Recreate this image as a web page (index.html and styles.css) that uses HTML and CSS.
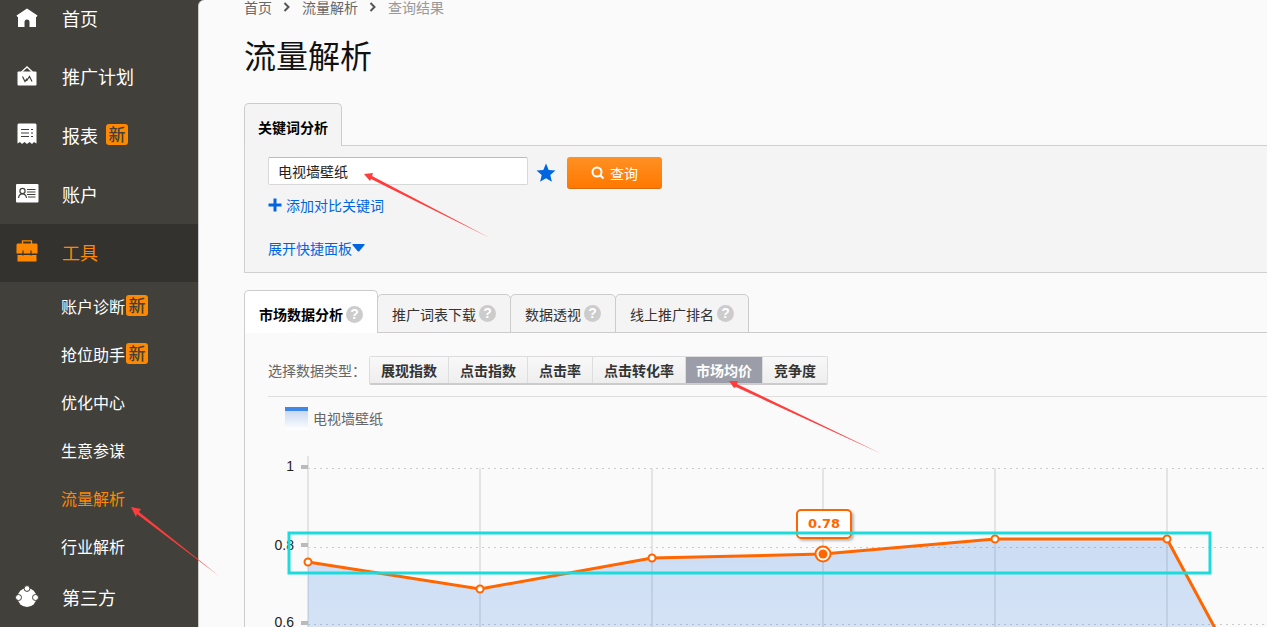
FILE: index.html
```html
<!DOCTYPE html>
<html lang="zh-CN">
<head>
<meta charset="utf-8">
<title>流量解析</title>
<link rel="stylesheet" href="styles.css">
</head>
<body>
<div class="layout">
  <nav class="sidebar">
    <ul class="menu">
      <li><a class="item first" href="#"><svg class="icon" viewBox="0 0 24 24"><path fill="#fff" fill-rule="evenodd" d="M12 2.500 1.500 9.500 2.500 11H3V21H21V11H21.500L22.500 9.500ZM9.500 21V16Q9.500 13.500 12 13.500T14.500 16V21Z"/></svg>首页</a></li>
      <li><a class="item" href="#"><svg class="icon" viewBox="0 0 24 24"><path fill="none" stroke="#fff" stroke-width="1.300" d="M6.500 8 12 3 17.500 8"/><rect x="2.500" y="7.500" width="19" height="14" rx="1" fill="#fff"/><path fill="none" stroke="#42403b" stroke-width="1.200" d="M7.500 12.500 10 17.500 12 14.500M11.500 17 14.500 12.500 17 17.500"/></svg>推广计划</a></li>
      <li><a class="item" href="#"><svg class="icon" viewBox="0 0 24 24"><path fill="#fff" d="M3.500 0.500H20.500L21.500 1.500V20.500L19 19 17 21 14.500 19 12 21 9.500 19 7 21 5 19 2.500 20.500V1.500Z"/><path stroke="#42403b" stroke-width="1.200" d="M6 6.500h8M6 10h8M6 13.500h8M16 6.500h2M16 10h2M16 13.500h2"/></svg>报表<span class="badge gap">新</span></a></li>
      <li><a class="item" href="#"><svg class="icon" viewBox="0 0 24 24"><rect x="1" y="2" width="22.500" height="18.500" rx="1" fill="#fff"/><g fill="none" stroke="#42403b" stroke-width="1.200"><circle cx="7.500" cy="9" r="2.600"/><path d="M3.500 16Q4 11.800 7.500 11.800T11.500 16M12 7.500h8.500M12 10h8.500M12 12.500h8.500M13 15h7.500"/></g></svg>账户</a></li>
      <li><a class="item current" href="#"><svg class="icon" viewBox="0 0 24 24"><path fill="none" stroke="#ff8800" stroke-width="1.300" d="M7.500 4V0.900H16.500V4"/><path fill="#ff8800" d="M2.500 3.500H21.500L22.500 4.500V13.500H1.500V4.500ZM2.500 15H21.500V21.500H2.500Z"/><path stroke="#34322e" stroke-width="1.200" d="M8 10.500v5M16 10.500v5"/></svg>工具</a></li>
    </ul>
    <ul class="menu">
      <li><a class="subitem" href="#">账户诊断<span class="badge">新</span></a></li>
      <li><a class="subitem" href="#">抢位助手<span class="badge">新</span></a></li>
      <li><a class="subitem" href="#">优化中心</a></li>
      <li><a class="subitem" href="#">生意参谋</a></li>
      <li><a class="subitem active" href="#">流量解析</a></li>
      <li><a class="subitem" href="#">行业解析</a></li>
    </ul>
    <ul class="menu">
      <li><a class="item last" href="#"><svg class="icon" viewBox="0 0 24 24"><circle cx="12" cy="12.500" r="9.500" fill="#fff"/><g fill="#fff" stroke="#42403b" stroke-width="1"><circle cx="12" cy="3.500" r="2.900"/><circle cx="3.500" cy="12.500" r="3"/><circle cx="20.500" cy="12.500" r="3"/></g></svg>第三方</a></li>
    </ul>
  </nav>

  <main class="main">
    <div class="crumbs">
      <a href="#">首页</a>
      <svg class="chevron" viewBox="0 0 8 10"><path d="M1.500 1 5.500 5 1.500 9"/></svg>
      <a href="#">流量解析</a>
      <svg class="chevron" viewBox="0 0 8 10"><path d="M1.500 1 5.500 5 1.500 9"/></svg>
      <span class="here">查询结果</span>
    </div>
    <h1 class="title">流量解析</h1>

    <div class="tabs"><button class="tab search-tab">关键词分析</button></div>
    <form class="panel search">
      <div class="search-row">
        <input class="keyword" type="text" value="电视墙壁纸" aria-label="关键词">
        <svg class="star" viewBox="0 0 20 20"><path fill="#0066e0" d="M10 .500 12.700 6.900 19.500 7.500 14.300 12 15.900 18.800 10 15.200 4.100 18.800 5.700 12 .500 7.500 7.300 6.900Z"/></svg>
        <button class="query" type="button"><svg class="lens" viewBox="0 0 14 14"><circle cx="6" cy="6" r="4.500"/><path d="M9.200 9.200 12.500 12.500"/></svg>查询</button>
      </div>
      <a class="link add" href="#"><svg class="plus" viewBox="0 0 14 14"><path d="M7 .500V13.500M.500 7H13.500"/></svg>添加对比关键词</a>
      <a class="link" href="#">展开快捷面板<svg class="caret" viewBox="0 0 13 8"><path d="M1 0H12Q13 0 12.500 1L7.500 7Q6.500 8 5.500 7L.500 1Q0 0 1 0Z"/></svg></a>
    </form>

    <div class="tabs data-tabs">
      <button class="tab selected">市场数据分析<span class="help">?</span></button>
      <button class="tab">推广词表下载<span class="help">?</span></button>
      <button class="tab">数据透视<span class="help">?</span></button>
      <button class="tab">线上推广排名<span class="help">?</span></button>
    </div>
    <section class="panel data">
      <div class="types">
        <span class="types-label">选择数据类型<span class="colon">：</span></span>
        <div class="segments">
          <button>展现指数</button><button>点击指数</button><button>点击率</button><button>点击转化率</button><button class="on">市场均价</button><button>竞争度</button>
        </div>
      </div>
      <div class="legend"><span class="swatch"></span>电视墙壁纸</div>
      <svg class="chart" role="img" aria-label="市场均价">
        <defs>
          <linearGradient id="area" x1="0" y1="103" x2="0" y2="400" gradientUnits="userSpaceOnUse"><stop offset="0" stop-color="#2f7be0" stop-opacity=".23"/><stop offset="1" stop-color="#3b7fe0" stop-opacity="0.080"/></linearGradient>
          <filter id="shadow" x="-20%" y="-20%" width="150%" height="160%"><feDropShadow dx="2" dy="2" stdDeviation="1" flood-color="#000" flood-opacity=".25"/></filter>
        </defs>
        <path class="grid-h" d="M40 32H1400M40 111H1400M40 188H1400"/>
        <path class="grid-v" d="M40 20V220M212 32V220M384 32V220M555 32V220M727 32V220M899 32V220"/>
        <path class="tick" d="M33 31H40M33 109H40M33 187H40"/>
        <path fill="url(#area)" d="M40 126 212 153 384 122 555 118 727 103H899L962 220H40Z"/>
        <path class="series" d="M40 126 212 153 384 122 555 118 727 103H899L962 220"/>
        <g class="dots"><circle cx="40" cy="126" r="3.500"/><circle cx="212" cy="153" r="3.500"/><circle cx="384" cy="122" r="3.500"/><circle cx="727" cy="103" r="3.500"/><circle cx="899" cy="103" r="3.500"/><circle cx="555" cy="118" r="7.500"/></g>
        <circle cx="555" cy="118" r="4.500" fill="#ff6600"/>
        <g class="axis"><text x="26" y="35">1</text><text x="26" y="114">0.8</text><text x="26" y="191">0.6</text></g>
        <rect class="tip" x="529" y="74" width="54" height="28" rx="4" filter="url(#shadow)"/>
        <text class="tip-text" x="556" y="92">0.78</text>
        <rect class="frame" x="21" y="97" width="921" height="40"/>
      </svg>
    </section>
  </main>
  <svg class="marks" aria-hidden="true">
    <path d="M131 507 141 509 139 512 219 576 137 514 136 517Z"/>
    <path d="M364 174 373 173 372 176 490 238 371 179 370 181Z"/>
    <path d="M729 381 738 381 737 384 882 454 736 387 734 388Z"/>
  </svg>
</div>
</body>
</html>
```
FILE: styles.css
```css
* { box-sizing: border-box; }
body {
  margin: 0;
  height: 100vh;
  overflow: hidden;
  background: #42403b;
  font: 14px/20px "Noto Sans CJK SC", sans-serif;
  color: #333;
}
a { text-decoration: none; color: inherit; }
button, input { font: inherit; color: inherit; margin: 0; }
svg { display: block; flex: none; }

.layout { position: relative; display: flex; height: 100vh; overflow: hidden; }
.sidebar { flex: none; width: 198px; color: #fff; }
.menu { list-style: none; margin: 0; padding: 0; }
.item {
  display: flex;
  align-items: center;
  height: 59px;
  padding-left: 15px;
  padding-bottom: 2px;
  gap: 23px;
  font-size: 18px;
}
.first { height: 47px; padding-bottom: 11px; }
.last { height: 56px; }
.icon { width: 24px; height: 24px; }
.current { height: 58px; background: #34322e; color: #ff8800; }
.subitem {
  display: flex;
  align-items: center;
  height: 48px;
  padding-left: 61px;
  padding-bottom: 1px;
  font-size: 16px;
}
.subitem.active { color: #ff8800; }
.badge {
  width: 22px;
  height: 21px;
  margin-left: 1px;
  border-radius: 3px;
  background: #ff8800;
  color: #42403b;
  font-size: 17px;
  font-weight: 500;
  line-height: 20px;
  text-align: center;
}
.badge.gap { margin-left: -15px; }

.main {
  flex: 1;
  min-width: 0;
  padding-left: 45px;
  overflow: hidden;
  border-left: 1px solid #ccc;
  border-top-left-radius: 6px;
  background: #fafafa;
}
.crumbs { display: flex; align-items: center; gap: 11px; height: 14px; line-height: 14px; color: #666; }
.crumbs .here { color: #999; }
.chevron { width: 8px; height: 10px; fill: none; stroke: #555; stroke-width: 2; }
.title { margin: 16px 0 25px; font-size: 32px; line-height: 48px; font-weight: 400; color: #111; }

.tabs { display: flex; align-items: flex-end; margin-bottom: -1px; position: relative; }
.tab {
  display: flex;
  align-items: center;
  gap: 3px;
  height: 39px;
  margin-right: -1px;
  padding: 0 14px;
  border: 1px solid #ccc;
  border-radius: 5px 5px 0 0;
  background: #f4f4f4;
}
.search-tab { height: 43px; padding: 4px 13px 0; border-bottom: 0; font-weight: 700; color: #000; }
.tab.selected { height: 43px; padding-top: 4px; border-bottom: 0; background: #fff; font-weight: 700; color: #000; }
.help {
  width: 17px;
  height: 17px;
  border-radius: 50%;
  background: #ccc;
  color: #fff;
  font: 700 14px/17px "Liberation Sans", sans-serif;
  text-align: center;
}
.panel { border: 1px solid #d0d0d0; border-right: 0; padding-left: 23px; }
.search { padding-top: 11px; padding-bottom: 14px; background: #f4f4f4; }
.search-row { display: flex; align-items: center; }
.keyword {
  align-self: flex-start;
  width: 260px;
  height: 28px;
  padding: 0 9px;
  border: 1px solid #d8d8d8;
  border-top-color: #bbb;
  border-radius: 2px;
  background: #fff;
  color: #222;
}
.star { width: 20px; height: 20px; margin: 0 11px 0 8px; }
.query {
  display: flex;
  align-items: center;
  justify-content: center;
  gap: 5px;
  width: 95px;
  height: 32px;
  border: 0;
  border-bottom: 1px solid #d96a10;
  border-radius: 3px;
  background: linear-gradient(#ff9124, #ff7800);
  color: #fff;
}
.lens { width: 14px; height: 14px; fill: none; stroke: #fff; stroke-width: 2; }
.link { display: flex; align-items: center; width: max-content; color: #0066e0; }
.add { gap: 4px; margin: 6px 0 23px; }
.plus { width: 14px; height: 14px; stroke: #0066e0; stroke-width: 3; }
.caret { width: 13px; height: 8px; fill: #0066e0; }

.data-tabs { margin-top: 17px; }
.data { padding-top: 23px; border-color: #ccc; border-bottom: 0; }
.types { display: flex; align-items: center; padding-bottom: 11px; border-bottom: 1px solid #ddd; }
.types-label { width: 101px; padding-bottom: 2px; color: #666; }
.colon { font-family: "Noto Sans CJK TC", sans-serif; }
.segments {
  display: flex;
  border: 1px solid #ddd;
  border-bottom: 2px solid #ccc;
  border-radius: 2px;
}
.segments button {
  height: 26px;
  padding: 0 11px;
  border: 0;
  border-right: 1px solid #ddd;
  background: linear-gradient(#f8f8f8, #eee);
  font-weight: 700;
  color: #333;
}
.segments button:last-child { border-right: 0; }
.segments .on { padding: 0 10px; background: #9b9ea8; color: #fff; }
.legend { display: flex; align-items: center; gap: 5px; margin: 11px 0 8px 17px; color: #666; }
.swatch { width: 23px; height: 23px; margin: -2px 0; border-top: 4px solid #4187e8; background: linear-gradient(#c9d9f2, #fff); }

.chart { width: 100%; height: 220px; }
.grid-h { stroke: #ccc; stroke-width: 1; stroke-dasharray: 2 4; shape-rendering: crispEdges; }
.grid-v { stroke: #ddd; stroke-width: 1.500; }
.tick { stroke: #bbb; stroke-width: 4; }
.series { fill: none; stroke: #ff6600; stroke-width: 3; }
.dots { fill: #fff; stroke: #ff6600; stroke-width: 2; }
.axis { font: 14px "Liberation Sans", sans-serif; fill: #222; text-anchor: end; }
.tip { fill: #fff; stroke: #ff6600; stroke-width: 2; }
.tip-text { font: 700 13px "DejaVu Sans", sans-serif; fill: #ff6600; text-anchor: middle; }
.frame { fill: none; stroke: #1ddbdd; stroke-width: 3; }
.marks { position: absolute; inset: 0; width: 100%; height: 100%; pointer-events: none; fill: #ff3d3d; }
```
